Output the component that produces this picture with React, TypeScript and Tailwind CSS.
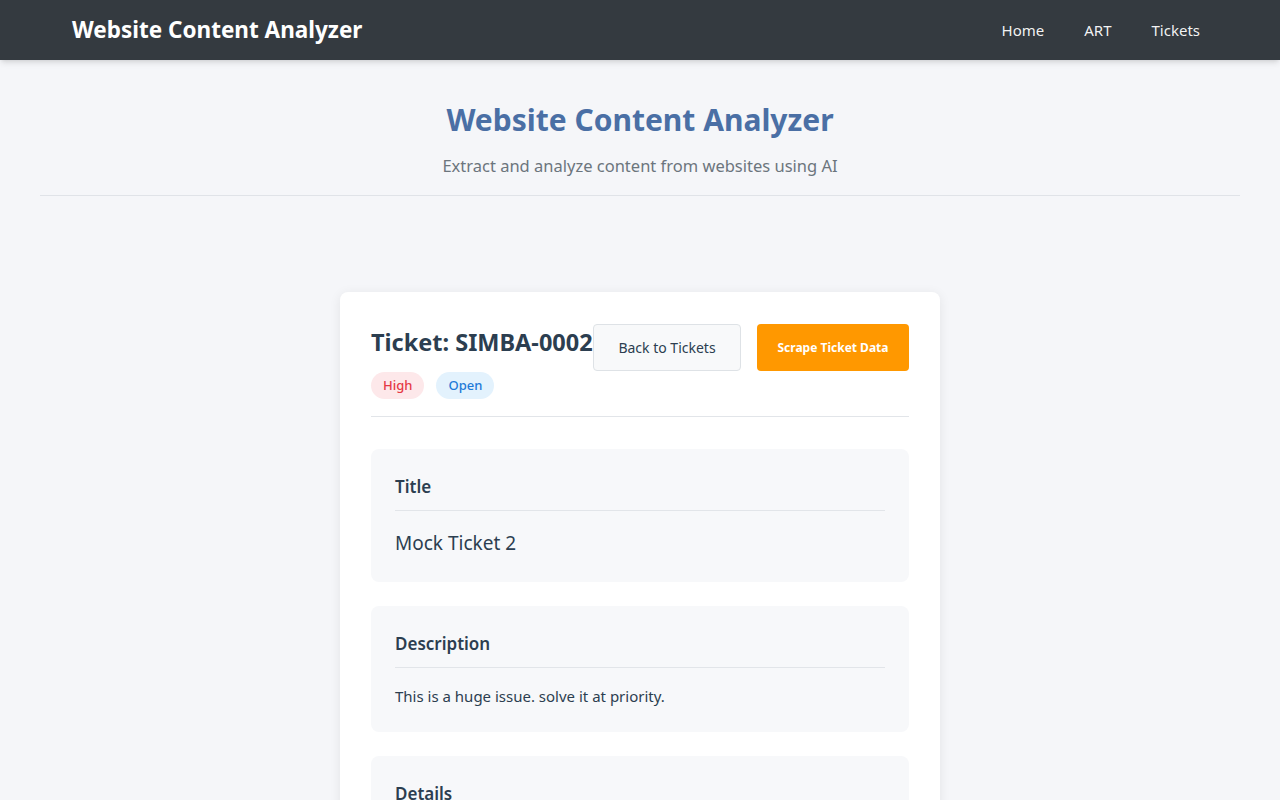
import React from "react";

const font = { fontFamily: '"Segoe UI", "Noto Sans", sans-serif' };

const Navbar: React.FC = () => (
  <nav className="h-[60px] bg-[#343a40] shadow-md">
    <div className="flex h-full items-center justify-between pl-[72px] pr-[72px]">
      <span className="text-[22.5px] font-bold text-white">Website Content Analyzer</span>
      <ul className="flex items-center gap-6">
        {["Home", "ART", "Tickets"].map((l) => (
          <li key={l}>
            <a href="#" className="px-2 text-[15px] text-white/95">
              {l}
            </a>
          </li>
        ))}
      </ul>
    </div>
  </nav>
);

const Section: React.FC<{ title: string; children: React.ReactNode; body: string }> = ({
  title,
  children,
  body,
}) => (
  <div className="rounded-lg bg-[#f7f8fa] px-6 pt-6 pb-6">
    <h3 className="border-b border-[#e2e5e9] pb-[10px] text-[17px] leading-[27px] font-semibold text-[#2c3e50]">
      {title}
    </h3>
    <div className={body}>{children}</div>
  </div>
);

export default function App() {
  return (
    <div className="min-h-screen bg-[#f5f6f9] text-[#2c3e50]" style={font}>
      <Navbar />
      <header className="mx-10 border-b border-[#e0e3e8] pt-9 pb-4 text-center">
        <h1 className="text-[30px] leading-[48px] font-bold text-[#4a6fa5]">Website Content Analyzer</h1>
        <p className="mt-2 text-[16.5px] leading-[27px] text-[#6c757d]">
          Extract and analyze content from websites using AI
        </p>
      </header>

      <main className="flex justify-center pt-24 pb-10">
        <div className="w-[600px] rounded-lg bg-white px-[31px] pt-8 pb-8 shadow-[0_2px_12px_rgba(0,0,0,0.08)]">
          <div className="flex items-start justify-between border-b border-[#e2e5e9] pb-[17px]">
            <div>
              <h2 className="text-[23.5px] leading-[36px] font-bold whitespace-nowrap text-[#2c3e50]">
                Ticket: SIMBA-0002
              </h2>
              <div className="mt-3 flex gap-3">
                <span className="rounded-full bg-[#fde8ea] px-3 text-[13px] leading-[27px] font-medium text-[#e53945]">
                  High
                </span>
                <span className="rounded-full bg-[#e3f2fd] px-3 text-[13px] leading-[27px] font-medium text-[#1e7ad8]">
                  Open
                </span>
              </div>
            </div>
            <div className="flex gap-4">
              <button className="h-[47px] w-[148px] rounded border border-[#dee2e6] bg-[#f8f9fa] text-[14px] whitespace-nowrap text-[#2c3e50]">
                Back to Tickets
              </button>
              <button className="h-[47px] w-[152px] rounded bg-[#ff9800] text-[12px] font-bold whitespace-nowrap text-white">
                Scrape Ticket Data
              </button>
            </div>
          </div>

          <div className="mt-8 flex flex-col gap-6">
            <Section title="Title" body="mt-[18px] text-[19px] leading-[29px]">
              Mock Ticket 2
            </Section>
            <Section title="Description" body="mt-4 text-[15px] leading-[24px]">
              This is a huge issue. solve it at priority.
            </Section>
            <Section title="Details" body="mt-4 text-[15px] leading-[24px]">
              <div className="grid grid-cols-2 gap-3">
                <div>
                  <span className="font-semibold">Status:</span> Open
                </div>
                <div>
                  <span className="font-semibold">Priority:</span> High
                </div>
              </div>
            </Section>
          </div>
        </div>
      </main>
    </div>
  );
}
